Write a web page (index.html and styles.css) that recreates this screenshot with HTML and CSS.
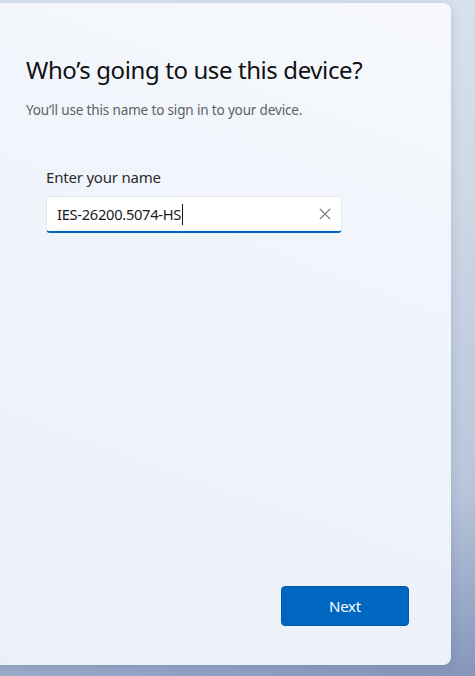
FILE: index.html
```html
<!DOCTYPE html>
<html lang="en">
<head>
<meta charset="utf-8">
<title>Who’s going to use this device?</title>
<link rel="stylesheet" href="styles.css">
</head>
<body>
<main class="card">
  <h1 class="title">Who’s going to use this device?</h1>
  <p class="subtitle">You’ll use this name to sign in to your device.</p>
  <div class="field">
    <label class="label" for="name">Enter your name</label>
    <div class="input">
      <span class="value" id="name">IES-26200.5074-HS</span><span class="caret"></span>
      <svg class="clear" width="12" height="12" viewBox="0 0 12 12" aria-hidden="true">
        <path d="M0.8 0.8 L11.2 11.2 M11.2 0.8 L0.8 11.2" stroke="#6f6f6f" stroke-width="1.1" fill="none"/>
      </svg>
    </div>
  </div>
  <div class="spacer"></div>
  <div class="footer">
    <button class="next" type="button">Next</button>
  </div>
</main>
</body>
</html>
```
FILE: styles.css
```css
html, body {
  margin: 0;
  height: 100%;
}
body {
  width: 475px;
  height: 676px;
  overflow: hidden;
  padding-top: 3px;
  box-sizing: border-box;
  background: linear-gradient(170deg, #dae5ef 0%, #cdd9e6 35%, #b9c5db 75%, #8496bb 100%);
  font-family: "Noto Sans", "Open Sans", sans-serif;
}
.card {
  margin-left: -12px;
  width: 463px;
  height: 662px;
  box-sizing: border-box;
  border-radius: 8px;
  background: linear-gradient(200deg, #f7f9fd 0%, #f0f4fb 40%, #ebeff7 100%);
  box-shadow: 0 2px 10px rgba(40, 60, 100, 0.18);
  padding: 51px 42px 39px 38px;
  display: flex;
  flex-direction: column;
}
.title {
  margin: 0;
  font-size: 24px;
  line-height: 32px;
  font-weight: 400;
  color: #111;
  letter-spacing: -0.4px;
}
.subtitle {
  margin: 15px 0 0;
  font-size: 13.5px;
  line-height: 18px;
  color: #5d5f63;
  letter-spacing: -0.15px;
}
.field {
  margin: 48px 0 0 20px;
  display: flex;
  flex-direction: column;
  width: 296px;
}
.label {
  font-size: 15px;
  line-height: 20px;
  color: #2b2b2b;
  letter-spacing: -0.2px;
}
.input {
  margin-top: 9px;
  height: 37px;
  box-sizing: border-box;
  background: #fff;
  border: 1px solid #e6e8ec;
  border-bottom: 2px solid #0067c0;
  border-radius: 4px;
  display: flex;
  align-items: center;
  padding: 0 10px 0 10px;
}
.value {
  font-size: 14.7px;
  color: #1a1a1a;
  letter-spacing: -0.3px;
  line-height: 20px;
}
.caret {
  width: 1px;
  height: 21px;
  background: #111;
  margin-left: 1px;
}
.clear {
  margin-left: auto;
}
.spacer {
  flex: 1;
}
.footer {
  display: flex;
  justify-content: flex-end;
}
.next {
  width: 128px;
  height: 40px;
  border-radius: 4px;
  border: 1px solid #005aa8;
  background: #0067c0;
  color: #fff;
  font-family: "Noto Sans", "Open Sans", sans-serif;
  font-size: 15px;
  letter-spacing: -0.2px;
  cursor: pointer;
}
```
